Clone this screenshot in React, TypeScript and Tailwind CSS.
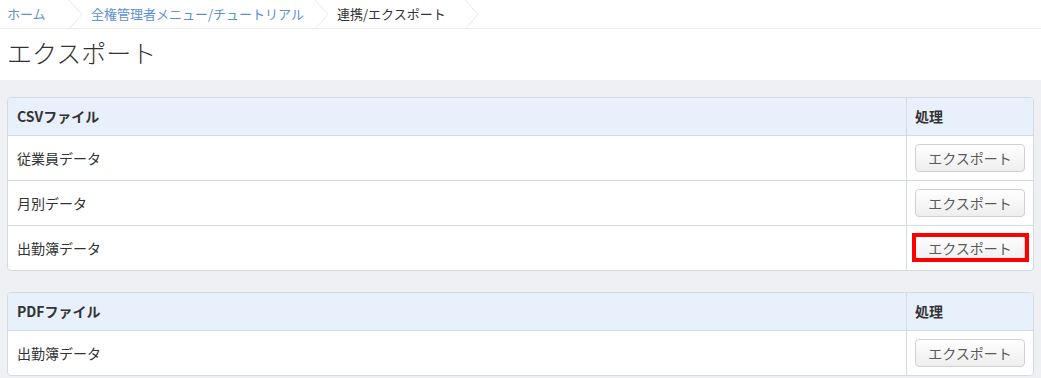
import React from "react";

const crumbs = [
  { label: "ホーム", link: true, w: "w-[84px]" },
  { label: "全権管理者メニュー/チュートリアル", link: true, w: "w-[246px]" },
  { label: "連携/エクスポート", link: false, w: "w-[150px]" },
];

interface Section {
  title: string;
  rows: { name: string; highlight?: boolean }[];
}

const sections: Section[] = [
  {
    title: "CSVファイル",
    rows: [{ name: "従業員データ" }, { name: "月別データ" }, { name: "出勤簿データ", highlight: true }],
  },
  {
    title: "PDFファイル",
    rows: [{ name: "出勤簿データ" }],
  },
];

function Chevron() {
  return (
    <svg width="16" height="29" viewBox="0 0 16 29" className="absolute right-0 top-0">
      <polyline points="1,0 14,14.5 1,29" fill="none" stroke="#e8e8e8" strokeWidth="1" />
    </svg>
  );
}

function ExportButton({ highlight }: { highlight?: boolean }) {
  return (
    <div className="relative">
      <button className="h-[28px] w-[110px] rounded-[4px] border border-[#d0d0d0] bg-gradient-to-b from-white to-[#eeeeee] text-[14px] leading-none text-[#5a5a5a]">
        エクスポート
      </button>
      {/* 注目用の赤枠 */}
      {highlight && (
        <div className="pointer-events-none absolute -left-[3px] -right-[4px] -top-[1px] -bottom-[0px] border-[4px] border-[#ff0000]" />
      )}
    </div>
  );
}

export default function App() {
  return (
    <div className="w-[1041px] h-[378px] overflow-hidden bg-white text-[#333] font-['Noto_Sans_CJK_JP','Noto_Sans',sans-serif]">
      {/* パンくず */}
      <div className="flex h-[29px] items-center border-b border-[#ececec] text-[13px]">
        {crumbs.map((c) => (
          <div key={c.label} className={`relative flex h-full items-center pl-[7px] ${c.w}`}>
            <span className={c.link ? "text-[#5b8fd8]" : "text-[#333]"}>{c.label}</span>
            <Chevron />
          </div>
        ))}
      </div>

      {/* タイトル */}
      <div className="h-[51px] px-[7px] pt-[7px]">
        <h1 className="text-[25px] font-light leading-[32px] text-[#333]">エクスポート</h1>
      </div>

      {/* 本体 */}
      <div className="flex flex-col gap-[21px] bg-[#eef0f4] px-[7px] pb-[10px] pt-[17px]">
        {sections.map((s) => (
          <div key={s.title} className="overflow-hidden rounded-[4px] border border-[#d5dbe2] bg-white">
            <div className="flex h-[38px] border-b border-[#d5dbe2] bg-[#e8f0fb] text-[14px] font-bold">
              <div className="flex flex-1 items-center border-r border-[#d5dbe2] pl-[9px]">{s.title}</div>
              <div className="flex w-[126px] items-center pl-[8px]">処理</div>
            </div>
            {s.rows.map((r, i) => {
              const last = i === s.rows.length - 1;
              return (
                <div
                  key={r.name}
                  className={`flex text-[14px] ${last ? "h-[44px]" : "h-[45px] border-b border-[#d5dbe2]"}`}
                >
                  <div className="flex flex-1 items-center border-r border-[#d5dbe2] pl-[9px]">{r.name}</div>
                  <div className="flex w-[126px] items-center pl-[8px]">
                    <ExportButton highlight={r.highlight} />
                  </div>
                </div>
              );
            })}
          </div>
        ))}
      </div>
    </div>
  );
}
